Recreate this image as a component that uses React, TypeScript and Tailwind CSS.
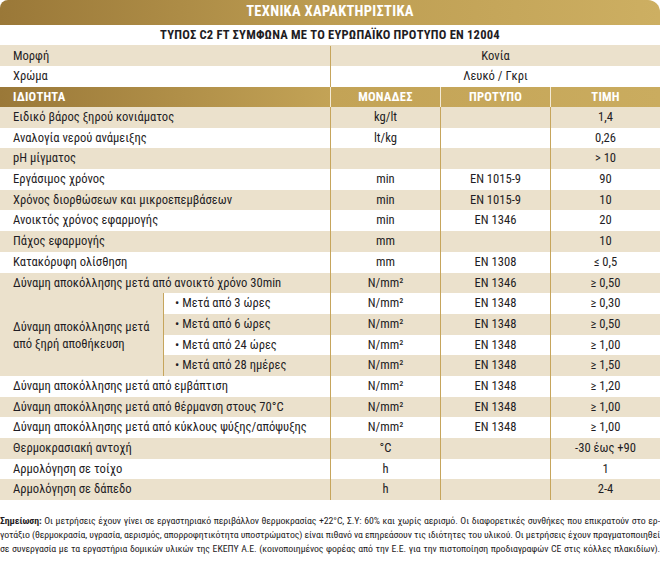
type Row = {
  label: string;
  unit?: string;
  std?: string;
  val: string;
};

const top: Row[] = [
  { label: "Ειδικό βάρος ξηρού κονιάματος", unit: "kg/lt", val: "1,4" },
  { label: "Αναλογία νερού ανάμειξης", unit: "lt/kg", val: "0,26" },
  { label: "pH μίγματος", val: "> 10" },
  { label: "Εργάσιμος χρόνος", unit: "min", std: "EN 1015-9", val: "90" },
  { label: "Χρόνος διορθώσεων και μικροεπεμβάσεων", unit: "min", std: "EN 1015-9", val: "10" },
  { label: "Ανοικτός χρόνος εφαρμογής", unit: "min", std: "EN 1346", val: "20" },
  { label: "Πάχος εφαρμογής", unit: "mm", val: "10" },
  { label: "Κατακόρυφη ολίσθηση", unit: "mm", std: "EN 1308", val: "≤ 0,5" },
  { label: "Δύναμη αποκόλλησης μετά από ανοικτό χρόνο 30min", unit: "N/mm²", std: "EN 1346", val: "≥ 0,50" },
];

const dry: Row[] = [
  { label: "• Μετά από 3 ώρες", unit: "N/mm²", std: "EN 1348", val: "≥ 0,30" },
  { label: "• Μετά από 6 ώρες", unit: "N/mm²", std: "EN 1348", val: "≥ 0,50" },
  { label: "• Μετά από 24 ώρες", unit: "N/mm²", std: "EN 1348", val: "≥ 1,00" },
  { label: "• Μετά από 28 ημέρες", unit: "N/mm²", std: "EN 1348", val: "≥ 1,50" },
];

const bottom: Row[] = [
  { label: "Δύναμη αποκόλλησης μετά από εμβάπτιση", unit: "N/mm²", std: "EN 1348", val: "≥ 1,20" },
  { label: "Δύναμη αποκόλλησης μετά από θέρμανση στους 70°C", unit: "N/mm²", std: "EN 1348", val: "≥ 1,00" },
  { label: "Δύναμη αποκόλλησης μετά από κύκλους ψύξης/απόψυξης", unit: "N/mm²", std: "EN 1348", val: "≥ 1,00" },
  { label: "Θερμοκρασιακή αντοχή", unit: "°C", val: "-30 έως +90" },
  { label: "Αρμολόγηση σε τοίχο", unit: "h", val: "1" },
  { label: "Αρμολόγηση σε δάπεδο", unit: "h", val: "2-4" },
];

const notes = [
  "Οι μετρήσεις έχουν γίνει σε εργαστηριακό περιβάλλον θερμοκρασίας +22°C, Σ.Υ: 60% και χωρίς αερισμό. Οι διαφορετικές συνθήκες που επικρατούν στο ερ-",
  "γοτάξιο (θερμοκρασία, υγρασία, αερισμός, απορροφητικότητα υποστρώματος) είναι πιθανό να επηρεάσουν τις ιδιότητες του υλικού. Οι μετρήσεις έχουν πραγματοποιηθεί",
  "σε συνεργασία με τα εργαστήρια δομικών υλικών της ΕΚΕΠΥ Α.Ε. (κοινοποιημένος φορέας από την Ε.Ε. για την πιστοποίηση προδιαγραφών CE στις κόλλες πλακιδίων).",
];

function Cells({ row }: { row: Row }) {
  return (
    <>
      <div className="w-[110px] flex items-center justify-center border-l border-[#c6a55c]">{row.unit}</div>
      <div className="w-[110px] flex items-center justify-center border-l border-[#c6a55c]">{row.std}</div>
      <div className="w-[110px] flex items-center justify-center border-l border-[#c6a55c]">{row.val}</div>
    </>
  );
}

function DataRow({ row, shaded }: { row: Row; shaded: boolean }) {
  return (
    <div className={`flex h-[20.7px] ${shaded ? "bg-[#ebe1cc]" : "bg-white"}`}>
      <div className="w-[330px] flex items-center pl-[13px]">{row.label}</div>
      <Cells row={row} />
    </div>
  );
}

export default function App() {
  return (
    <div className="w-[660px] bg-white text-[#1f1d24] text-[12.6px] leading-none font-['Roboto_Condensed',sans-serif]">
      <div className="h-[25px] rounded-tl-[8px] rounded-tr-[12px] bg-gradient-to-r from-[#9a7838] via-[#bd9d52] to-[#cdaf62] flex items-center justify-center text-white font-bold text-[14.5px] tracking-[0.3px]">
        ΤΕΧΝΙΚΑ ΧΑΡΑΚΤΗΡΙΣΤΙΚΑ
      </div>
      <div className="h-[20px] flex items-center justify-center font-bold text-[12.6px] tracking-[0.2px]">
        ΤΥΠΟΣ C2 FT ΣΥΜΦΩΝΑ ΜΕ ΤΟ ΕΥΡΩΠΑΪΚΟ ΠΡΟΤΥΠΟ EN 12004
      </div>
      <div className="flex h-[21px] bg-[#ebe1cc] pt-px">
        <div className="w-[330px] flex items-center pl-[13px]">Μορφή</div>
        <div className="flex-1 flex items-center justify-center border-l border-[#c6a55c]">Κονία</div>
      </div>
      <div className="flex h-[21px] bg-white">
        <div className="w-[330px] flex items-center pl-[13px]">Χρώμα</div>
        <div className="flex-1 flex items-center justify-center border-l border-[#c6a55c]">Λευκό / Γκρι</div>
      </div>
      <div className="flex h-[20px] text-white font-bold text-[12.6px] tracking-[0.2px] bg-gradient-to-r from-[#9a7838] via-[#c3a356] via-50% to-[#caac5f]">
        <div className="w-[330px] flex items-center pl-[13px]">ΙΔΙΟΤΗΤΑ</div>
        <div className="w-[110px] flex items-center justify-center border-l border-[#f3ead6]">ΜΟΝΑΔΕΣ</div>
        <div className="w-[110px] flex items-center justify-center border-l border-[#f3ead6]">ΠΡΟΤΥΠΟ</div>
        <div className="w-[110px] flex items-center justify-center border-l border-[#f3ead6]">ΤΙΜΗ</div>
      </div>
      {top.map((row, i) => (
        <DataRow key={i} row={row} shaded={i % 2 === 0} />
      ))}
      <div className="flex">
        <div className="w-[163px] bg-[#ebe1cc] flex items-center pl-[13px] pr-[6px] leading-[17px]">
          Δύναμη αποκόλλησης μετά από ξηρή αποθήκευση
        </div>
        <div className="flex-1">
          {dry.map((row, i) => (
            <div key={i} className={`flex h-[20.7px] ${i % 2 === 1 ? "bg-[#ebe1cc]" : "bg-white"}`}>
              <div className="w-[167px] flex items-center pl-[11px] border-l border-[#c6a55c]">{row.label}</div>
              <Cells row={row} />
            </div>
          ))}
        </div>
      </div>
      {bottom.map((row, i) => (
        <DataRow key={i} row={row} shaded={i % 2 === 1} />
      ))}
      <div className="mt-[14px] text-[9.8px] leading-[14px] tracking-[-0.1px]">
        {notes.map((line, i) => (
          <p key={i} className="text-justify [text-align-last:justify] whitespace-nowrap">
            {i === 0 && <span className="font-bold">Σημείωση: </span>}
            {line}
          </p>
        ))}
      </div>
    </div>
  );
}
